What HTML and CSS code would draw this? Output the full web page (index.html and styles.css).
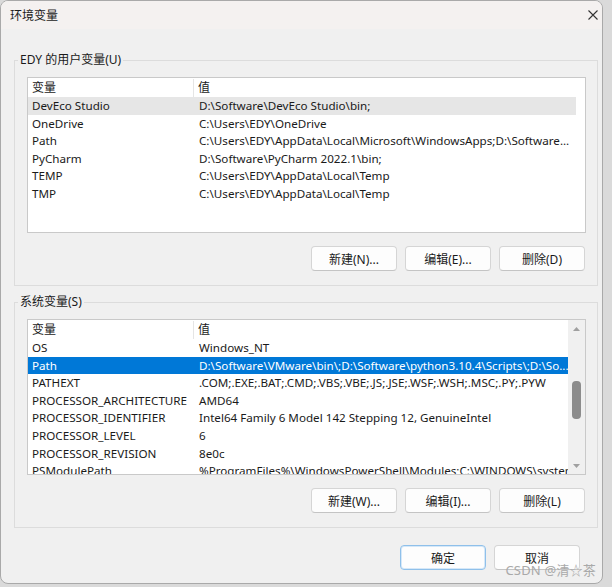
FILE: index.html
```html
<!DOCTYPE html>
<html lang="zh-CN">
<head>
    <meta charset="UTF-8">
    <meta name="viewport" content="width=device-width, initial-scale=1.0">
    <title>环境变量</title>
    <link rel="stylesheet" href="styles.css">
</head>
<body>
    <div class="window">
        <div class="titlebar">
            <span class="title">环境变量</span>
            <svg class="close" width="10" height="10" viewBox="0 0 10 10">
                <path d="M0.5 0.5L9.5 9.5M9.5 0.5L0.5 9.5" stroke="#333" stroke-width="1.1" fill="none"/>
            </svg>
        </div>

        <div class="content">
            <fieldset class="group">
                <legend>EDY 的用户变量(U)</legend>
                <div class="list">
                    <div class="rows">
                        <div class="row head"><span class="name">变量</span><span class="value">值</span></div>
                        <div class="row current"><span class="name">DevEco Studio</span><span class="value">D:\Software\DevEco Studio\bin;</span></div>
                        <div class="row"><span class="name">OneDrive</span><span class="value">C:\Users\EDY\OneDrive</span></div>
                        <div class="row"><span class="name">Path</span><span class="value">C:\Users\EDY\AppData\Local\Microsoft\WindowsApps;D:\Software...</span></div>
                        <div class="row"><span class="name">PyCharm</span><span class="value">D:\Software\PyCharm 2022.1\bin;</span></div>
                        <div class="row"><span class="name">TEMP</span><span class="value">C:\Users\EDY\AppData\Local\Temp</span></div>
                        <div class="row"><span class="name">TMP</span><span class="value">C:\Users\EDY\AppData\Local\Temp</span></div>
                    </div>
                </div>
                <div class="group-buttons">
                    <button type="button" class="btn">新建(N)...</button>
                    <button type="button" class="btn">编辑(E)...</button>
                    <button type="button" class="btn">删除(D)</button>
                </div>
            </fieldset>

            <fieldset class="group system">
                <legend>系统变量(S)</legend>
                <div class="list">
                    <div class="rows">
                        <div class="row head"><span class="name">变量</span><span class="value">值</span></div>
                        <div class="row"><span class="name">OS</span><span class="value">Windows_NT</span></div>
                        <div class="row selected"><span class="name">Path</span><span class="value">D:\Software\VMware\bin\;D:\Software\python3.10.4\Scripts\;D:\So...</span></div>
                        <div class="row"><span class="name">PATHEXT</span><span class="value">.COM;.EXE;.BAT;.CMD;.VBS;.VBE;.JS;.JSE;.WSF;.WSH;.MSC;.PY;.PYW</span></div>
                        <div class="row"><span class="name">PROCESSOR_ARCHITECTURE</span><span class="value">AMD64</span></div>
                        <div class="row"><span class="name">PROCESSOR_IDENTIFIER</span><span class="value">Intel64 Family 6 Model 142 Stepping 12, GenuineIntel</span></div>
                        <div class="row"><span class="name">PROCESSOR_LEVEL</span><span class="value">6</span></div>
                        <div class="row"><span class="name">PROCESSOR_REVISION</span><span class="value">8e0c</span></div>
                        <div class="row"><span class="name">PSModulePath</span><span class="value">%ProgramFiles%\WindowsPowerShell\Modules;C:\WINDOWS\system32</span></div>
                    </div>
                    <div class="scrollbar">
                        <div class="arrow"><svg width="7" height="4" viewBox="0 0 7 4"><path d="M0 4L3.5 0L7 4Z" fill="#a0a0a0"/></svg></div>
                        <div class="track"><div class="thumb"></div></div>
                        <div class="arrow"><svg width="7" height="4" viewBox="0 0 7 4"><path d="M0 0L7 0L3.5 4Z" fill="#a0a0a0"/></svg></div>
                    </div>
                </div>
                <div class="group-buttons">
                    <button type="button" class="btn">新建(W)...</button>
                    <button type="button" class="btn">编辑(I)...</button>
                    <button type="button" class="btn">删除(L)</button>
                </div>
            </fieldset>

            <div class="dialog-buttons">
                <button type="button" class="btn default">确定</button>
                <button type="button" class="btn">取消</button>
            </div>
        </div>

        <div class="watermark">CSDN @清☆茶</div>
    </div>
</body>
</html>
```

FILE: styles.css
```css
body {
    margin: 0;
    background-color: #dadada;
    font-family: "Noto Sans", "Noto Sans CJK SC", sans-serif;
    font-size: 12px;
    color: #1a1a1a;
}

.window {
    position: relative;
    width: 603px;
    height: 584px;
    box-sizing: border-box;
    border: 1px solid #a9a9a9;
    border-radius: 8px;
    background: #f0f0f0;
    overflow: hidden;
}

.titlebar {
    height: 28px;
    display: flex;
    align-items: center;
    justify-content: space-between;
    padding: 0 4px 0 9px;
    background: #f4f1f0;
}

.title {
    font-size: 12px;
}

.content {
    padding: 23px 4px 0 13px;
}

.group {
    margin: 0;
    padding: 9px 11px 14px 12px;
    border: 1px solid #dcdcdc;
    min-width: 0;
}

.group legend {
    margin-left: -9px;
    padding: 0 2px;
    line-height: 16px;
}

.system {
    margin-top: 8px;
}

.list {
    display: flex;
    height: 156px;
    box-sizing: border-box;
    border: 1px solid #c9c9c9;
    background: #ffffff;
    overflow: hidden;
}

.rows {
    flex: 1;
    min-width: 0;
    padding-top: 1px;
    overflow: hidden;
    font-size: 11.65px;
}

.row {
    display: flex;
    width: 548px;
    height: 17.6px;
    line-height: 17.6px;
    white-space: nowrap;
}

.row.head {
    height: 18px;
    line-height: 18px;
    font-size: 12px;
}

.name {
    width: 166px;
    flex: none;
    box-sizing: border-box;
    padding-left: 4px;
    overflow: hidden;
}

.value {
    width: 382px;
    flex: none;
    box-sizing: border-box;
    padding-left: 5px;
    overflow: hidden;
}

.head .name {
    border-right: 1px solid #e5e5e5;
}

.head .value {
    padding-left: 4px;
}

.row.current {
    background: #e6e6e6;
}

.row.selected {
    background: #0078d7;
    color: #ffffff;
}

.scrollbar {
    width: 17px;
    flex: none;
    display: flex;
    flex-direction: column;
    background: #f0f0f0;
}

.arrow {
    height: 17px;
    display: flex;
    align-items: center;
    justify-content: center;
}

.track {
    flex: 1;
    padding-top: 44px;
}

.thumb {
    width: 9px;
    height: 38px;
    margin-left: 4px;
    border-radius: 4px;
    background: #8c8c8c;
}

.group-buttons {
    display: flex;
    justify-content: flex-end;
    gap: 8px;
    margin-top: 13px;
    padding-right: 1px;
}

.btn {
    width: 86px;
    height: 25px;
    padding: 0;
    font-family: inherit;
    font-size: 12px;
    color: #1a1a1a;
    background: #fdfdfd;
    border: 1px solid #d5d5d5;
    border-bottom-color: #c4c4c4;
    border-radius: 4px;
}

.btn.default {
    border-color: #8fc0ea;
    box-shadow: inset 0 0 0 1px #d6e8f8;
}

.dialog-buttons {
    display: flex;
    justify-content: flex-end;
    gap: 8px;
    margin-top: 17px;
    padding-right: 18px;
}

.watermark {
    position: absolute;
    right: 6px;
    bottom: 4px;
    font-size: 13px;
    color: #a9a9a9;
    letter-spacing: 0.2px;
}
```
